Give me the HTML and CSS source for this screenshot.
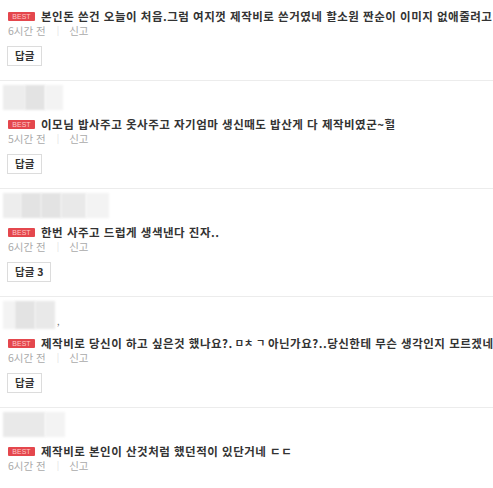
FILE: index.html
```html
<!DOCTYPE html>
<html lang="ko">
<head>
<meta charset="utf-8">
<link rel="stylesheet" href="styles.css">
</head>
<body>
<div class="list">
  <div class="comment first">
    <div class="avatar"></div>
    <div class="text"><span class="best">BEST</span>본인돈 쓴건 오늘이 처음.그럼 여지껏 제작비로 쓴거였네 할소원 짠순이 이미지 없애줄려고</div>
    <div class="meta"><span>6시간 전</span><span class="bar">|</span><span>신고</span></div>
    <div class="actions"><span class="reply">답글</span></div>
  </div>
  <div class="comment">
    <div class="avatar">
      <span class="tile t1" style="width:22px"></span><span class="tile t2" style="width:20px"></span><span class="tile t3" style="width:18px"></span>
    </div>
    <div class="text"><span class="best">BEST</span>이모님 밥사주고 옷사주고 자기엄마 생신때도 밥산게 다 제작비였군~헐</div>
    <div class="meta"><span>5시간 전</span><span class="bar">|</span><span>신고</span></div>
    <div class="actions"><span class="reply">답글</span></div>
  </div>
  <div class="comment">
    <div class="avatar">
      <span class="tile t1" style="width:18px"></span><span class="tile t2" style="width:20px"></span><span class="tile t2" style="width:20px"></span><span class="tile t4" style="width:25px"></span><span class="tile t3" style="width:23px"></span>
    </div>
    <div class="text"><span class="best">BEST</span>한번 사주고 드럽게 생색낸다 진자..</div>
    <div class="meta"><span>6시간 전</span><span class="bar">|</span><span>신고</span></div>
    <div class="actions"><span class="reply">답글 3</span></div>
  </div>
  <div class="comment tall">
    <div class="avatar">
      <span class="tile t3" style="width:12px"></span><span class="tile t2" style="width:20px"></span><span class="tile t4" style="width:20px"></span><span class="comma">,</span>
    </div>
    <div class="text"><span class="best">BEST</span>제작비로 당신이 하고 싶은것 했나요?.<span class="jamo">ㅁㅊ ㄱ </span>아닌가요?..당신한테 무슨 생각인지 모르겠네요</div>
    <div class="meta"><span>6시간 전</span><span class="bar">|</span><span>신고</span></div>
    <div class="actions"><span class="reply">답글</span></div>
  </div>
  <div class="comment">
    <div class="avatar">
      <span class="tile t4" style="width:42px"></span><span class="tile t3" style="width:20px"></span>
    </div>
    <div class="text"><span class="best">BEST</span>제작비로 본인이 산것처럼 했던적이 있단거네 ㄷㄷ</div>
    <div class="meta"><span>6시간 전</span><span class="bar">|</span><span>신고</span></div>
  </div>
</div>
</body>
</html>
```

FILE: styles.css
```css
html, body {
  margin: 0;
  padding: 0;
  background: #fff;
  overflow: hidden;
}
body {
  width: 493px;
  height: 488px;
  font-family: "Noto Sans CJK KR", "Noto Sans", sans-serif;
  font-kerning: none;
  color: #333;
}
.list {
  margin-top: -28px;
}
.comment {
  border-top: 1px solid #ececec;
  padding: 4px 0 14px 8px;
  white-space: nowrap;
}
.avatar {
  display: flex;
  height: 25px;
  margin-left: -5px;
  margin-bottom: 6px;
}
.tall .avatar {
  height: 28px;
}
.tile {
  display: block;
  height: 100%;
  filter: blur(1px);
}
.t1 { background: #ededed; }
.t2 { background: #e3e3e3; }
.t3 { background: #f3f3f3; }
.t4 { background: #e9e9e9; }
.comma {
  font-size: 9px;
  color: #777;
  align-self: flex-end;
  margin-left: 2px;
  line-height: 14px;
}
.text {
  height: 16px;
  line-height: 16px;
  font-size: 11.5px;
  font-weight: 700;
  letter-spacing: 0.5px;
  color: #333;
  display: flex;
  align-items: center;
}
.jamo {
  font-size: 10px;
  letter-spacing: 0;
  margin-left: 2px;
  white-space: pre;
}
.best {
  display: inline-block;
  width: 27px;
  height: 9px;
  line-height: 9px;
  background: #e4474d;
  color: #ffc9c9;
  font-family: "Liberation Sans", Arial, sans-serif;
  font-size: 7px;
  font-weight: 400;
  letter-spacing: 0;
  text-align: center;
  border-radius: 1px;
  margin-right: 6px;
  flex: none;
}
.meta {
  height: 14px;
  line-height: 14px;
  font-size: 10.5px;
  color: #aaa;
  display: flex;
  align-items: center;
}
.bar {
  color: #e2e2e2;
  margin: 0 10px 0 11px;
  font-size: 9px;
}
.actions {
  margin-top: 8px;
  display: flex;
}
.reply {
  display: inline-block;
  height: 18px;
  line-height: 18px;
  border: 1px solid #dcdcdc;
  padding: 0 7px;
  margin-left: -1px;
  font-size: 10.5px;
  font-weight: 700;
  color: #333;
}
```
